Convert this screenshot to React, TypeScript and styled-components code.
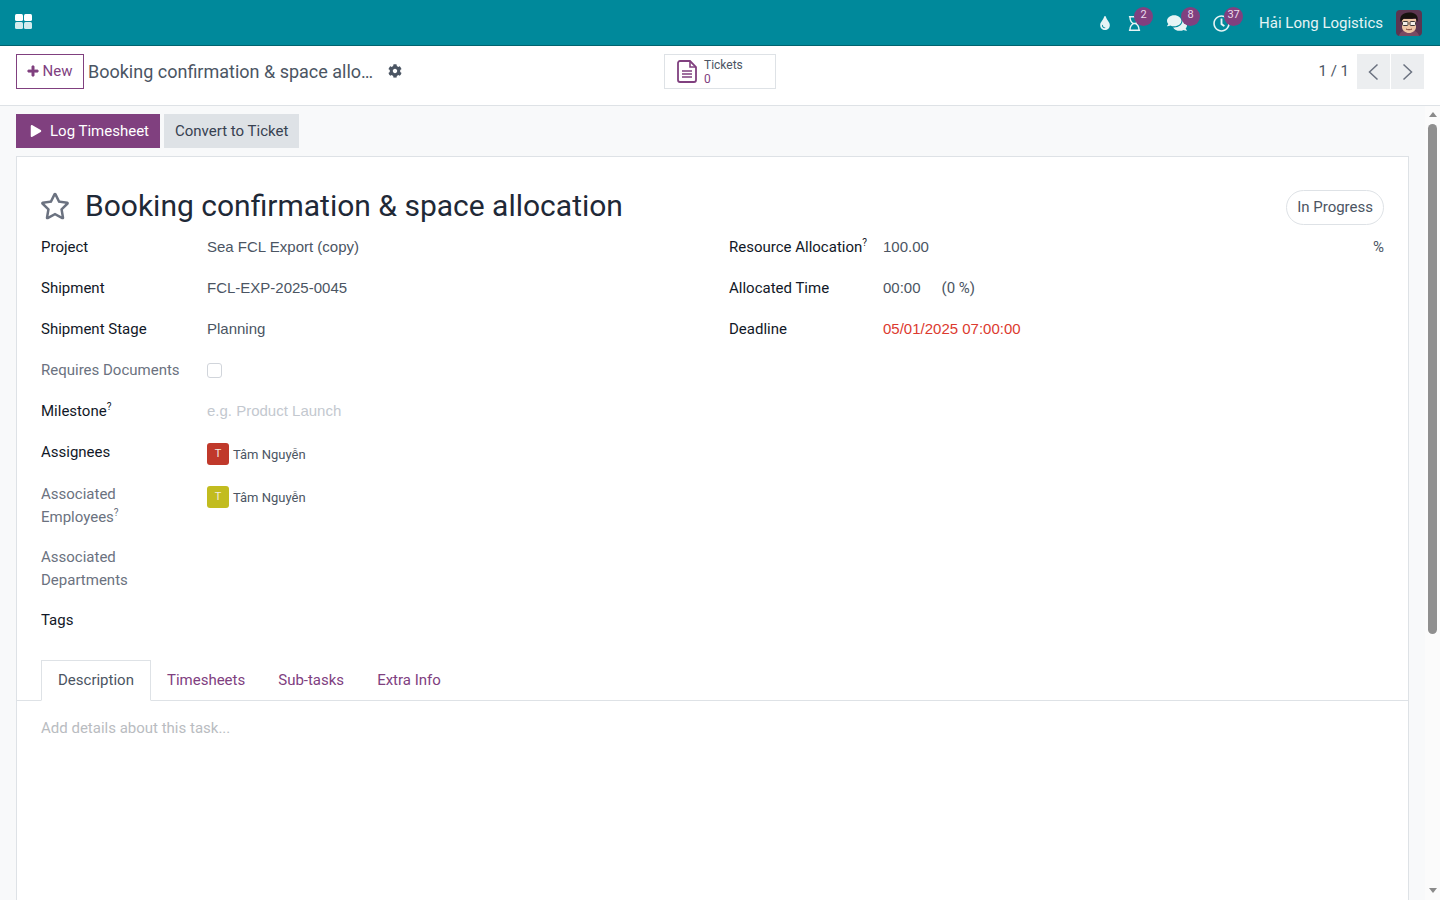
import React from 'react';
import styled, { createGlobalStyle } from 'styled-components';
import { FaCog, FaComments, FaPlay, FaPlus, FaRegClock, FaRegHourglass, FaRegStar, FaTint } from 'react-icons/fa';

const PURPLE = '#80407f';
const BORDER = '#dee2e6';

const GlobalStyle = createGlobalStyle`
	html, body {
		margin: 0;
		height: 100%;
		overflow: hidden;
	}
	body {
		font-family: Roboto, "Noto Sans", sans-serif;
		font-size: 15px;
		color: #374151;
		background: #fff;
	}
`;

const Page = styled.div`
	height: 100vh;
	display: flex;
	flex-direction: column;
`;

const NavBar = styled.header`
	height: 45px;
	flex: none;
	display: flex;
	align-items: center;
	justify-content: space-between;
	background: #00899b;
	border-bottom: 1px solid #00636f;
	color: #e6f4f5;
`;

const AppsButton = styled.div`
	display: grid;
	grid-template-columns: 8px 8px;
	grid-gap: 1px;
	margin-left: 15px;
	margin-top: -3px;
`;

const AppTile = styled.span<{ $dim?: boolean }>`
	height: 7px;
	border-radius: 1.5px;
	background: ${(p) => (p.$dim ? '#d5ecee' : '#ffffff')};
`;

const Systray = styled.div`
	display: flex;
	align-items: center;
	height: 100%;
	padding-right: 18px;
`;

const TrayItem = styled.div<{ $width: number }>`
	position: relative;
	width: ${(p) => p.$width}px;
	display: flex;
	font-size: 17px;
	margin-top: 1px;
`;

const Badge = styled.span<{ $left: number }>`
	position: absolute;
	top: calc(50% - 16.5px);
	left: ${(p) => p.$left}px;
	height: 19px;
	min-width: 19px;
	padding: 0 2px;
	box-sizing: border-box;
	border-radius: 10px;
	background: ${PURPLE};
	color: #ecdcec;
	font-size: 11px;
	line-height: 16px;
	text-align: center;
`;

const CompanyName = styled.span`
	font-size: 15px;
	margin-right: 13px;
`;

const ControlPanel = styled.div`
	height: 60px;
	flex: none;
	box-sizing: border-box;
	display: grid;
	grid-template-columns: 1fr 112px 1fr;
	align-items: start;
	padding: 8px 16px 0;
	background: #fff;
	border-bottom: 1px solid ${BORDER};
`;

const Crumbs = styled.div`
	display: flex;
	align-items: center;
	height: 35px;
`;

const NewButton = styled.button`
	height: 35px;
	width: 68px;
	box-sizing: border-box;
	display: flex;
	align-items: center;
	justify-content: center;
	gap: 4px;
	padding: 0 0 2px;
	background: #fff;
	border: 1px solid ${PURPLE};
	color: ${PURPLE};
	font: 400 15px Roboto, sans-serif;
	svg {
		font-size: 12px;
		margin-left: -1px;
		stroke: currentColor;
		stroke-width: 30;
	}
`;

const CrumbTitle = styled.span`
	width: 285px;
	margin-left: 4px;
	font-size: 18px;
	color: #4b5563;
	white-space: nowrap;
`;

const Gear = styled.span`
	display: flex;
	margin-left: 15px;
	margin-top: -2px;
	font-size: 14px;
	color: #4b5563;
`;

const StatButton = styled.div`
	height: 35px;
	box-sizing: border-box;
	display: flex;
	align-items: center;
	gap: 7px;
	padding-left: 12px;
	border: 1px solid ${BORDER};
	background: #fff;
`;

const StatText = styled.div`
	font-size: 12px;
	line-height: 14px;
	color: #4b5563;
`;

const StatValue = styled.div`
	color: ${PURPLE};
`;

const Pager = styled.div`
	display: flex;
	align-items: center;
	justify-content: flex-end;
	height: 35px;
	gap: 1px;
`;

const PagerText = styled.span`
	margin: 0 7px 2px 0;
	font-size: 15px;
	color: #4b5563;
`;

const PagerButton = styled.div`
	width: 33px;
	height: 35px;
	display: flex;
	align-items: center;
	justify-content: center;
	background: #eceef0;
	color: #6b7280;
`;

const Workspace = styled.div`
	flex: 1;
	min-height: 0;
	display: flex;
`;

const Scroller = styled.main`
	flex: 1;
	min-width: 0;
	overflow: hidden;
	background: #f8f9fa;
	padding: 8px 16px 0;
`;

const ScrollRail = styled.div`
	flex: none;
	width: 15px;
	display: flex;
	flex-direction: column;
	align-items: center;
	padding: 6px 0 7px;
	box-sizing: border-box;
	background: #fbfbfb;
`;

const ScrollThumb = styled.div`
	width: 9px;
	height: 510px;
	margin: 7px 0 auto;
	border-radius: 5px;
	background: #8f8f8f;
`;

const ScrollArrow = styled.div<{ $down?: boolean }>`
	width: 0;
	height: 0;
	border-left: 4.5px solid transparent;
	border-right: 4.5px solid transparent;
	${(p) => (p.$down ? 'border-top: 5px solid #8a8a8a;' : 'border-bottom: 5px solid #8a8a8a;')}
`;

const ActionBar = styled.div`
	display: flex;
	gap: 4px;
	margin-bottom: 8px;
`;

const ActionButton = styled.button<{ $primary?: boolean }>`
	height: 34px;
	display: flex;
	align-items: center;
	gap: 8px;
	border: 0;
	padding: ${(p) => (p.$primary ? '0 11px 0 14px' : '0 11px')};
	background: ${(p) => (p.$primary ? PURPLE : BORDER)};
	color: ${(p) => (p.$primary ? '#fff' : '#374151')};
	font: 400 15px Roboto, sans-serif;
	svg {
		font-size: 12px;
	}
`;

const Sheet = styled.section`
	background: #fff;
	border: 1px solid ${BORDER};
	min-height: 1126px;
`;

const SheetBody = styled.div`
	padding: 33px 24px 0;
`;

const TitleRow = styled.div`
	display: flex;
	align-items: center;
	justify-content: space-between;
	height: 35px;
	margin-bottom: 11px;
`;

const TitleBlock = styled.div`
	display: flex;
	align-items: center;
	margin-bottom: 4px;
`;

const Star = styled.span`
	display: flex;
	width: 45px;
	margin-left: -1px;
	font-size: 30px;
	color: #6b7280;
`;

const Title = styled.h1`
	margin: 0;
	font-size: 30px;
	font-weight: 400;
	color: #1f2937;
`;

const StatusPill = styled.span`
	height: 35px;
	box-sizing: border-box;
	padding: 0 10px 2px;
	display: flex;
	align-items: center;
	border: 1px solid ${BORDER};
	border-radius: 18px;
	font-size: 15px;
	color: #4b5563;
`;

const Columns = styled.div`
	display: grid;
	grid-template-columns: 688px 1fr;
`;

const FieldGroup = styled.div<{ $labelWidth: number }>`
	display: grid;
	grid-template-columns: ${(p) => p.$labelWidth}px 1fr;
	align-content: start;
	row-gap: 18px;
	line-height: 23px;
`;

const Label = styled.div<{ $muted?: boolean; $tight?: boolean }>`
	font-weight: 400;
	color: ${(p) => (p.$muted ? '#6b7280' : '#111827')};
	width: 142px;
	margin-bottom: ${(p) => (p.$tight ? '-1px' : '0')};
	white-space: ${(p) => (p.$muted ? 'normal' : 'nowrap')};
	sup {
		font-size: 10px;
		line-height: 0;
	}
`;

const Value = styled.div<{ $tone?: 'danger' | 'placeholder' }>`
	margin-top: -1px;
	font-family: "Liberation Sans", Arial, sans-serif;
	font-size: 15px;
	color: ${(p) => (p.$tone === 'danger' ? '#dc3a2f' : p.$tone === 'placeholder' ? '#c3c8cf' : '#4b5563')};
`;

const SplitValue = styled(Value)`
	display: flex;
	justify-content: space-between;
`;

const Spread = styled(Value)`
	display: flex;
	gap: 21px;
`;

const Unit = styled.span`
	margin-top: 1px;
	font-family: Roboto, sans-serif;
`;

const CheckBox = styled.span`
	display: block;
	width: 15px;
	height: 15px;
	margin-top: 5px;
	box-sizing: border-box;
	border: 1px solid #d1d5db;
	border-radius: 3px;
	background: #fff;
`;

const Person = styled.div<{ $top: number }>`
	display: flex;
	align-items: center;
	gap: 4px;
	height: 22px;
	margin-top: ${(p) => p.$top}px;
	font-size: 13px;
	color: #4b5563;
`;

const Initial = styled.span<{ $color: string }>`
	width: 22px;
	height: 22px;
	border-radius: 3px;
	background: ${(p) => p.$color};
	color: #f3ece0;
	font-size: 11px;
	line-height: 22px;
	text-align: center;
`;

const Tabs = styled.nav`
	display: flex;
	height: 41px;
	box-sizing: border-box;
	margin-top: 28px;
	padding-left: 24px;
	border-bottom: 1px solid ${BORDER};
`;

const Tab = styled.div<{ $active?: boolean }>`
	height: 41px;
	box-sizing: border-box;
	line-height: 39px;
	padding: ${(p) => (p.$active ? '0 16px' : '1px 17px 0 16px')};
	border: ${(p) => (p.$active ? `1px solid ${BORDER}` : '0')};
	border-bottom-color: #fff;
	background: ${(p) => (p.$active ? '#fff' : 'transparent')};
	color: ${(p) => (p.$active ? '#4b5563' : PURPLE)};
`;

const Editor = styled.div`
	padding: 16px 24px;
	line-height: 23px;
	color: #b9bcc1;
`;

const Chevron = ({ flip }: { flip?: boolean }) => (
	<svg width="11" height="18" viewBox="0 0 11 18" fill="none" stroke="currentColor" strokeWidth="1.5">
		<path d={flip ? 'M1.5 1.5 9.5 9 1.5 16.5' : 'M9.5 1.5 1.5 9 9.5 16.5'} />
	</svg>
);

const TicketIcon = () => (
	<svg width="20" height="23" viewBox="0 0 20 23" fill="none" stroke={PURPLE}>
		<path d="M13 1H3a2 2 0 0 0-2 2v17a2 2 0 0 0 2 2h14a2 2 0 0 0 2-2V7z" strokeWidth="1.8" />
		<path d="M13 1v6h6" strokeWidth="1.6" />
		<path d="M5 11h10M5 14h10M5 17h10" strokeWidth="1.5" />
	</svg>
);

const Avatar = () => (
	<svg width="26" height="26" viewBox="0 0 26 26" style={{ display: 'block' }}>
		<rect width="26" height="26" rx="4" fill="#5b3550" />
		<path d="M3 26c1-5 5-6 10-6s9 1 10 6z" fill="#7a4a62" />
		<path d="M6 9h14v8c0 3.5-3.5 6-7 6s-7-2.5-7-6z" fill="#eec5a4" />
		<path d="M4.5 12C3 6 7 2.5 13 2.5S23 5 21.5 12l-2-4c-3 1-9 1-11.5 0.5z" fill="#17120f" />
		<rect x="6.5" y="11.5" width="5.5" height="4" rx="1" fill="#f4efe8" stroke="#3c3735" strokeWidth="1" />
		<rect x="14" y="11.5" width="5.5" height="4" rx="1" fill="#f4efe8" stroke="#3c3735" strokeWidth="1" />
		<path d="M10 19c2 1 4 1 6 0" stroke="#7d3d32" strokeWidth="1" fill="none" />
	</svg>
);

export default function App() {
	return (
		<Page>
			<GlobalStyle />
			<NavBar>
				<AppsButton>
					<AppTile />
					<AppTile />
					<AppTile $dim />
					<AppTile $dim />
				</AppsButton>
				<Systray>
					<TrayItem $width={30}><FaTint size={14} style={{ marginLeft: 1 }} /></TrayItem>
					<TrayItem $width={40}><FaRegHourglass size={15} /><Badge $left={7}>2</Badge></TrayItem>
					<TrayItem $width={46}><FaComments size={20} /><Badge $left={14}>8</Badge></TrayItem>
					<TrayItem $width={46}><FaRegClock size={17} /><Badge $left={11}>37</Badge></TrayItem>
					<CompanyName>Hải Long Logistics</CompanyName>
					<Avatar />
				</Systray>
			</NavBar>
			<ControlPanel>
				<Crumbs>
					<NewButton><FaPlus />New</NewButton>
					<CrumbTitle>Booking confirmation &amp; space allo…</CrumbTitle>
					<Gear><FaCog /></Gear>
				</Crumbs>
				<StatButton>
					<TicketIcon />
					<StatText>Tickets<StatValue>0</StatValue></StatText>
				</StatButton>
				<Pager>
					<PagerText>1 / 1</PagerText>
					<PagerButton><Chevron /></PagerButton>
					<PagerButton><Chevron flip /></PagerButton>
				</Pager>
			</ControlPanel>
			<Workspace>
				<Scroller>
					<ActionBar>
						<ActionButton $primary><FaPlay />Log Timesheet</ActionButton>
						<ActionButton>Convert to Ticket</ActionButton>
					</ActionBar>
					<Sheet>
						<SheetBody>
							<TitleRow>
								<TitleBlock>
									<Star><FaRegStar /></Star>
									<Title>Booking confirmation &amp; space allocation</Title>
								</TitleBlock>
								<StatusPill>In Progress</StatusPill>
							</TitleRow>
							<Columns>
								<FieldGroup $labelWidth={166}>
									<Label>Project</Label>
									<Value>Sea FCL Export (copy)</Value>
									<Label>Shipment</Label>
									<Value>FCL-EXP-2025-0045</Value>
									<Label>Shipment Stage</Label>
									<Value>Planning</Value>
									<Label $muted>Requires Documents</Label>
									<Value><CheckBox /></Value>
									<Label>Milestone<sup>?</sup></Label>
									<Value $tone="placeholder">e.g. Product Launch</Value>
									<Label>Assignees</Label>
									<Person $top={2}><Initial $color="#c0392b">T</Initial>Tâm Nguyễn</Person>
									<Label $muted $tight>Associated Employees<sup>?</sup></Label>
									<Person $top={3}><Initial $color="#c2bc1f">T</Initial>Tâm Nguyễn</Person>
									<Label $muted $tight>Associated Departments</Label>
									<Value />
									<Label>Tags</Label>
									<Value />
								</FieldGroup>
								<FieldGroup $labelWidth={154}>
									<Label>Resource Allocation<sup>?</sup></Label>
									<SplitValue><span>100.00</span><Unit>%</Unit></SplitValue>
									<Label>Allocated Time</Label>
									<Spread><span>00:00</span><Unit>(0 %)</Unit></Spread>
									<Label>Deadline</Label>
									<Value $tone="danger">05/01/2025 07:00:00</Value>
								</FieldGroup>
							</Columns>
						</SheetBody>
						<Tabs>
							<Tab $active>Description</Tab>
							<Tab>Timesheets</Tab>
							<Tab>Sub-tasks</Tab>
							<Tab>Extra Info</Tab>
						</Tabs>
						<Editor>Add details about this task...</Editor>
					</Sheet>
				</Scroller>
				<ScrollRail>
					<ScrollArrow />
					<ScrollThumb />
					<ScrollArrow $down />
				</ScrollRail>
			</Workspace>
		</Page>
	);
}
